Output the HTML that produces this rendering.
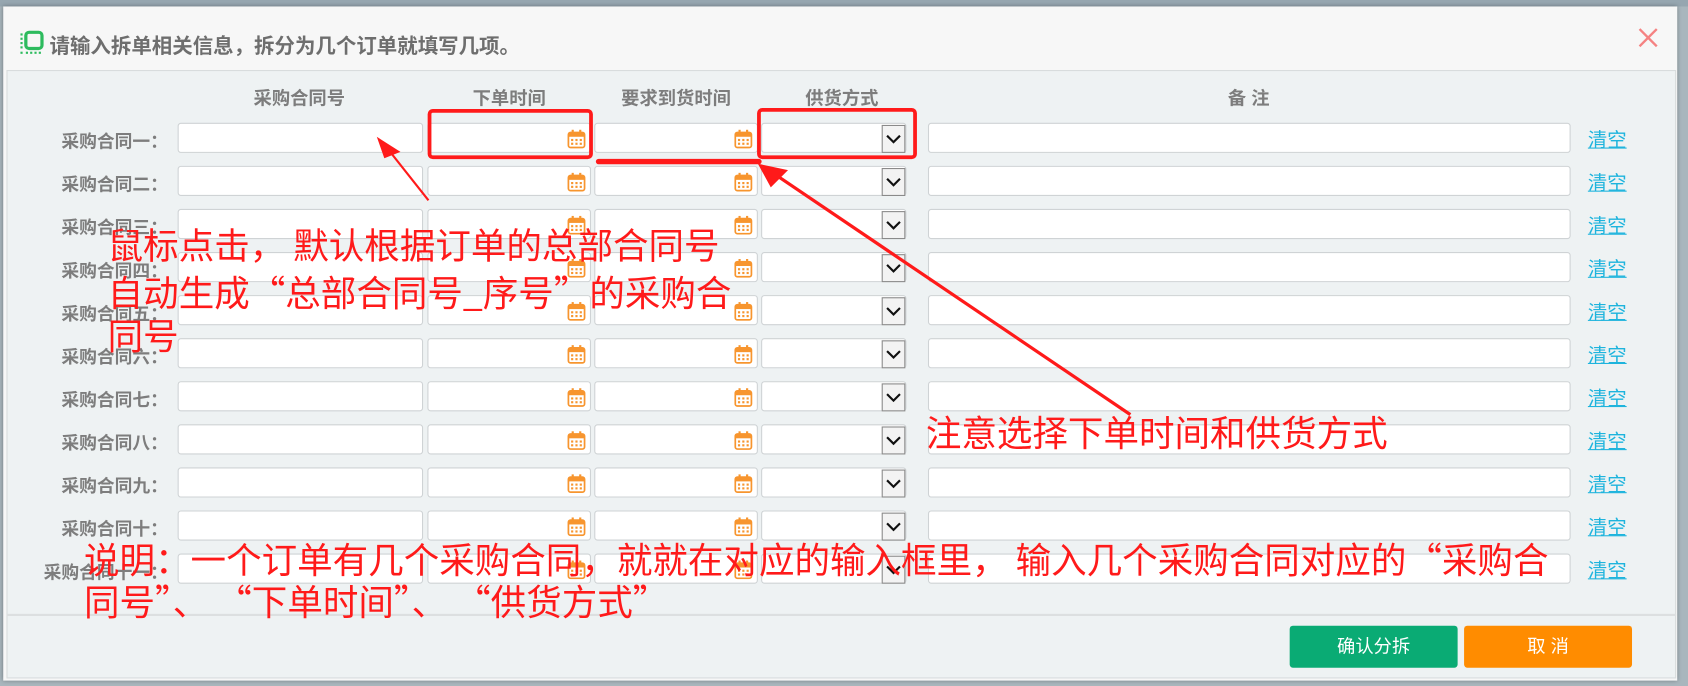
<!DOCTYPE html>
<html><head><meta charset="utf-8">
<style>
html,body{margin:0;padding:0;width:1688px;height:686px;overflow:hidden;background:#a9b6bd;}
#s{position:absolute;left:0;top:0;width:1568px;height:637px;transform:scale(1.07653,1.07692);transform-origin:0 0;font-family:"Liberation Sans","Noto Sans CJK SC",sans-serif;}
.abs{position:absolute;}
#dlg{left:3px;top:6px;width:1555px;height:626px;background:#f7f7f7;box-shadow:0 0 4px rgba(0,0,0,.35);}
#body{left:6px;top:65px;width:1549px;height:563px;background:#eef2f3;border:1px solid #d8dcdd;}
.hd{top:77px;font-weight:bold;color:#7d7d7d;font-size:17px;text-align:center;}
.lb{font-weight:bold;color:#7d7d7d;font-size:16.5px;text-align:right;width:160px;left:-4px;}
.in{background:#fff;border:1px solid #cfd3d5;border-radius:3px;height:28px;box-sizing:border-box;}
.cal{position:absolute;right:4px;top:5px;}
.arr{position:absolute;right:0;top:1px;width:22px;height:26px;background:#f3f3f3;border:1px solid #8a8a8a;box-sizing:border-box;}
.clr{color:#1eb4dd;font-size:18px;text-decoration:underline;left:1475px;}
.red{color:#ff1a1a;font-size:33px;font-family:"Noto Sans CJK SC",sans-serif;white-space:pre;line-height:40px;}
</style></head><body>
<div id="s">
<div class="abs" style="left:0;top:0;width:1568px;height:6px;background:#96a6b0"></div>
<div class="abs" id="dlg"></div>
<svg class="abs" style="left:18px;top:28px" width="24" height="24" viewBox="0 0 24 24"><rect x="6" y="2" width="15" height="15" rx="3" fill="none" stroke="#2dbb5e" stroke-width="3"/><g fill="#2dbb5e"><rect x="1" y="3" width="2" height="2"/><rect x="1" y="7" width="2" height="2"/><rect x="1" y="11" width="2" height="2"/><rect x="1" y="15" width="2" height="2"/><rect x="1" y="20" width="2" height="2"/><rect x="6" y="20" width="2" height="2"/><rect x="10" y="20" width="2" height="2"/><rect x="14" y="20" width="2" height="2"/><rect x="18" y="20" width="2" height="2"/></g></svg>
<div class="abs" style="left:46px;top:28px;font-size:19px;font-weight:bold;color:#6e6e6e">请输入拆单相关信息，拆分为几个订单就填写几项。</div>
<svg class="abs" style="left:1521px;top:25px" width="20" height="20" viewBox="0 0 20 20"><path d="M2 2L18 18M18 2L2 18" stroke="#f58282" stroke-width="2.2"/></svg>
<div class="abs" id="body"></div>
<div class="abs" style="left:6px;top:570px;width:1551px;height:2px;background:#dcdfe0"></div>
<div class="abs hd" style="left:198px;width:160px">采购合同号</div>
<div class="abs hd" style="left:397px;width:152px">下单时间</div>
<div class="abs hd" style="left:552px;width:152px">要求到货时间</div>
<div class="abs hd" style="left:707px;width:150px">供货方式</div>
<div class="abs hd" style="left:1080px;width:160px">备 注</div>
<div id="rows"></div>
<div class="abs" style="left:1198px;top:581px;width:156px;height:39px;background:#0aab74;border-radius:3px;color:#fff;font-size:17px;text-align:center;line-height:39px">确认分拆</div>
<div class="abs" style="left:1360px;top:581px;width:156px;height:39px;background:#ff8c00;border-radius:3px;color:#fff;font-size:17px;text-align:center;line-height:39px">取 消</div>
<svg class="abs" style="left:0;top:0" width="1568" height="637">
<rect x="399" y="103" width="150" height="43" rx="3" fill="none" stroke="#ff1a1a" stroke-width="3.5"/>
<rect x="705" y="102" width="145" height="44" rx="3" fill="none" stroke="#ff1a1a" stroke-width="3.5"/>
<path d="M556 150L705 150" stroke="#ff1a1a" stroke-width="5" stroke-linecap="round"/>
<path d="M398 186L360 138" stroke="#ff1a1a" stroke-width="2"/>
<path d="M350 127L372 141L357 147Z" fill="#ff1a1a"/>
<path d="M1050 385L720 162" stroke="#ff1a1a" stroke-width="3"/>
<path d="M704 152L732 158L716 174Z" fill="#ff1a1a"/>
</svg>
<div class="abs red" style="left:100px;top:206px">鼠标点击， 默认根据订单的总部合同号</div>
<div class="abs red" style="left:100px;top:250px">自动生成“总部合同号_序号”的采购合</div>
<div class="abs red" style="left:100px;top:290px">同号</div>
<div class="abs red" style="left:860px;top:380px;font-size:33px">注意选择下单时间和供货方式</div>
<div class="abs red" style="left:78px;top:498px">说明：一个订单有几个采购合同，就就在对应的输入框里， 输入几个采购合同对应的“采购合</div>
<div class="abs red" style="left:78px;top:537px">同号”、 “下单时间”、 “供货方式”</div>
</div>
<script>
var L=["一","二","三","四","五","六","七","八","九","十","十一"];
var cal='<svg class="cal" width="17" height="18" viewBox="0 0 17 18"><rect x="1" y="3" width="15" height="14" rx="2" fill="none" stroke="#f7952e" stroke-width="1.6"/><rect x="1" y="3" width="15" height="4" fill="#f7952e"/><rect x="4" y="0.5" width="2" height="4" fill="#f7952e"/><rect x="11" y="0.5" width="2" height="4" fill="#f7952e"/><g fill="#f7952e"><rect x="3.5" y="9" width="2" height="2"/><rect x="7.5" y="9" width="2" height="2"/><rect x="11.5" y="9" width="2" height="2"/><rect x="3.5" y="12.5" width="2" height="2"/><rect x="7.5" y="12.5" width="2" height="2"/><rect x="11.5" y="12.5" width="2" height="2"/></g></svg>';
var arr='<div class="arr"><svg width="20" height="24" viewBox="0 0 20 24"><path d="M4 9L10 15L16 9" fill="none" stroke="#111" stroke-width="2"/></svg></div>';
var h="";
for(var i=0;i<11;i++){var y=114+40*i;
h+='<div class="abs lb" style="top:'+(y+4)+'px">采购合同'+L[i]+'：</div>';
h+='<div class="abs in" style="left:165px;top:'+y+'px;width:228px"></div>';
h+='<div class="abs in" style="left:397px;top:'+y+'px;width:152px">'+cal+'</div>';
h+='<div class="abs in" style="left:552px;top:'+y+'px;width:152px">'+cal+'</div>';
h+='<div class="abs in" style="left:707px;top:'+y+'px;width:135px">'+arr+'</div>';
h+='<div class="abs in" style="left:862px;top:'+y+'px;width:597px"></div>';
h+='<div class="abs clr" style="top:'+(y+2)+'px">清空</div>';}
document.getElementById("rows").innerHTML=h;
</script>
</body></html>
